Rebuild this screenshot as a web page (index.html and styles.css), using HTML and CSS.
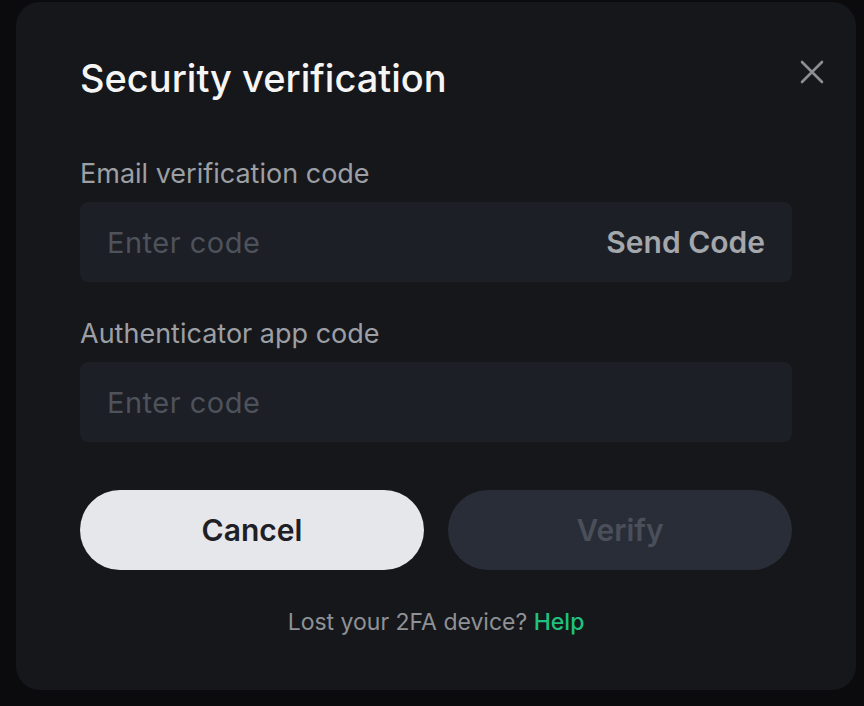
FILE: index.html
```html
<!DOCTYPE html>
<html lang="en">
<head>
<meta charset="utf-8">
<title>Security verification</title>
<link rel="stylesheet" href="styles.css">
</head>
<body>
<div class="modal">
  <button class="close" aria-label="Close">
    <svg width="26" height="26" viewBox="0 0 26 26"><path d="M3 3L23 23M23 3L3 23" stroke="#8b8e94" stroke-width="2.6" stroke-linecap="round"/></svg>
  </button>
  <h1 class="title">Security verification</h1>
  <div class="field">
    <div class="label">Email verification code</div>
    <div class="input">
      <span class="placeholder">Enter code</span>
      <span class="send">Send Code</span>
    </div>
  </div>
  <div class="field second">
    <div class="label">Authenticator app code</div>
    <div class="input">
      <span class="placeholder">Enter code</span>
    </div>
  </div>
  <div class="actions">
    <button class="btn cancel">Cancel</button>
    <button class="btn verify">Verify</button>
  </div>
  <div class="footer">Lost your 2FA device? <a class="help">Help</a></div>
</div>
</body>
</html>
```
FILE: styles.css
```css
* { box-sizing: border-box; }
html, body { margin: 0; padding: 0; }
body {
  background: #0b0b0e;
  width: 864px;
  height: 706px;
  overflow: hidden;
  font-family: Inter, "Noto Sans", sans-serif;
}
.modal {
  position: relative;
  margin: 2px 8px 0 16px;
  width: 840px;
  height: 688px;
  background: #16171b;
  border-radius: 24px;
  padding: 52px 64px 0 64px;
  display: flex;
  flex-direction: column;
}
.close {
  position: absolute;
  top: 57px;
  right: 31px;
  background: none;
  border: 0;
  padding: 0;
  width: 26px;
  height: 26px;
  display: flex;
}
.title {
  margin: 0;
  font-size: 38px;
  line-height: 48px;
  font-weight: 500;
  color: #f5f5f5;
}
.field { margin-top: 56px; display: flex; flex-direction: column; }
.field.second { margin-top: 36px; }
.label {
  font-size: 27px;
  line-height: 32px;
  color: #9c9fa4;
  margin-bottom: 12px;
}
.input {
  height: 80px;
  background: #1c1f26;
  border-radius: 8px;
  padding: 0 27px;
  display: flex;
  align-items: center;
  justify-content: space-between;
}
.placeholder { font-size: 29px; letter-spacing: 0.5px; color: #4e525a; }
.send { font-size: 30px; font-weight: 600; color: #a4a7ac; }
.actions {
  margin-top: 48px;
  display: grid;
  grid-template-columns: 1fr 1fr;
  gap: 24px;
}
.btn {
  height: 80px;
  border: 0;
  border-radius: 40px;
  font-family: inherit;
  font-size: 30px;
  font-weight: 600;
}
.cancel { background: #e5e7ea; color: #1e2026; }
.verify { background: #292d37; color: #4a4f5a; }
.footer {
  margin-top: 37px;
  text-align: center;
  font-size: 23px;
  line-height: 30px;
  color: #8e9196;
}
.help { color: #20c17f; font-weight: 500; }
```
